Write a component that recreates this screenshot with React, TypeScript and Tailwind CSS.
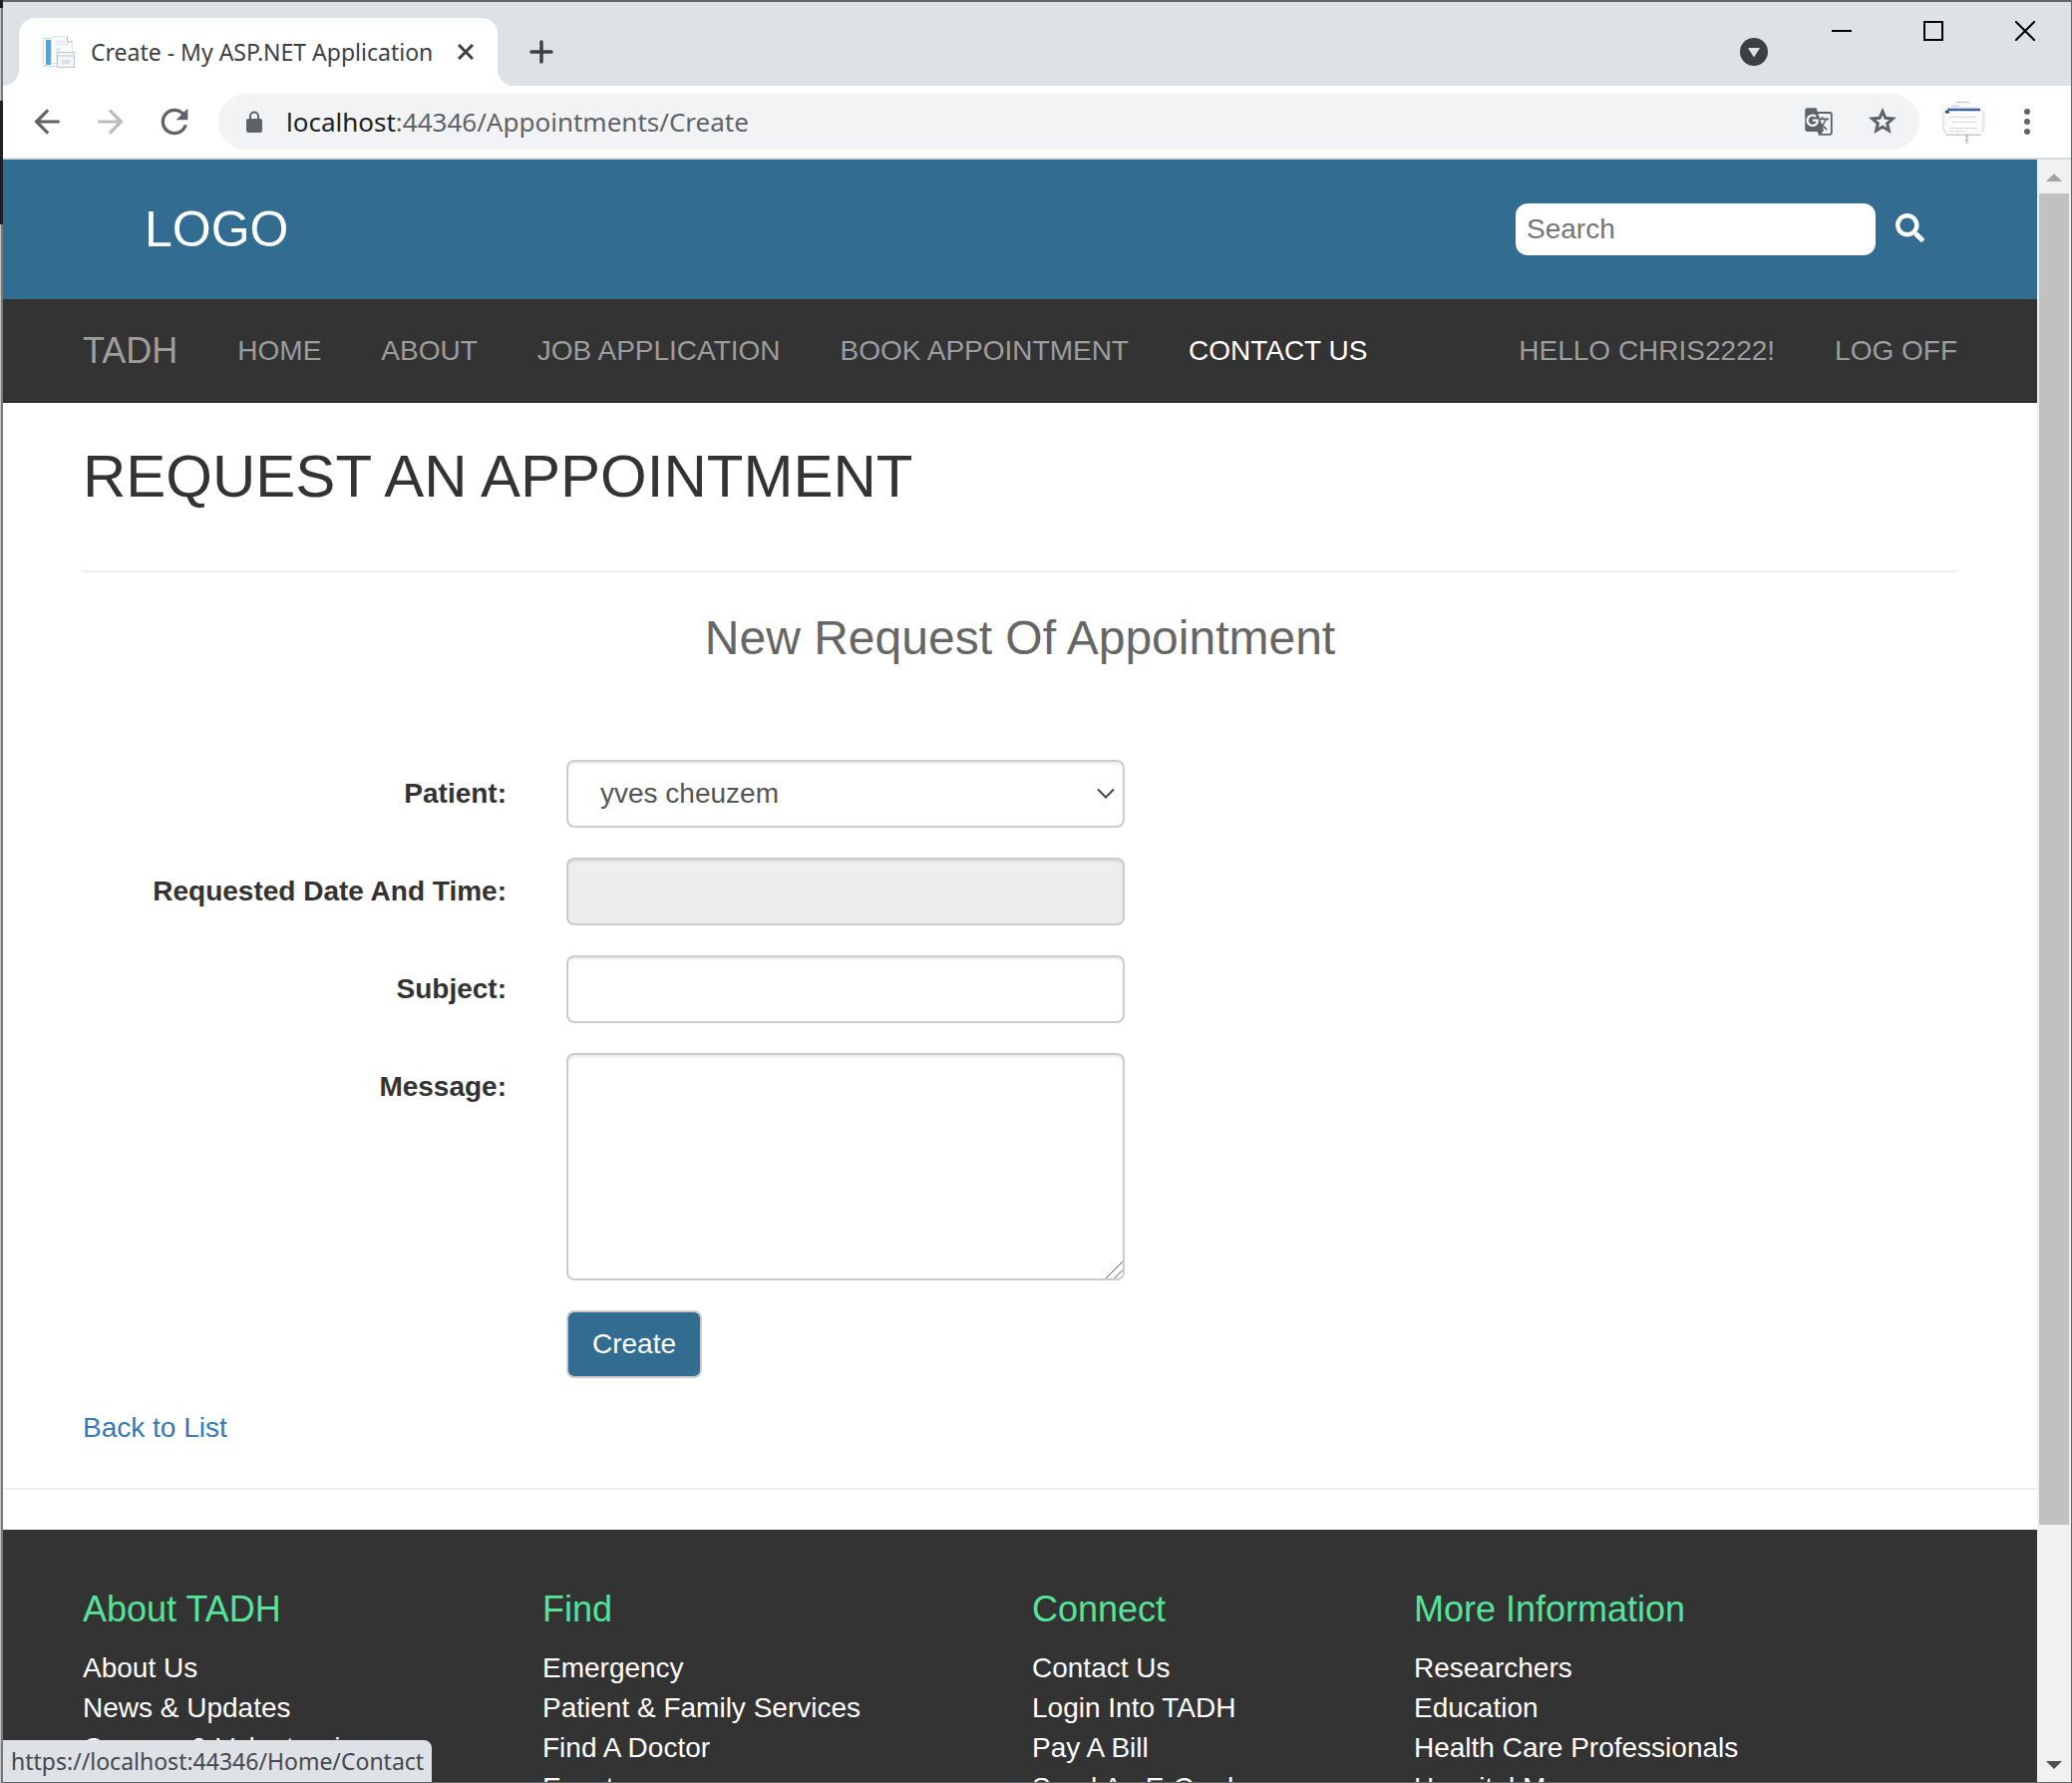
import React from "react";
import { FaSearch } from "react-icons/fa";
import { MdArrowBack, MdArrowForward, MdGTranslate, MdRefresh } from "react-icons/md";

const navLinks = ["Home", "About", "Job Application", "Book Appointment", "Contact Us"];

const footerColumns = [
  { title: "About TADH", links: ["About Us", "News & Updates", "Careers & Volunteering"] },
  { title: "Find", links: ["Emergency", "Patient & Family Services", "Find A Doctor", "Events"] },
  { title: "Connect", links: ["Contact Us", "Login Into TADH", "Pay A Bill", "Send An E-Card"] },
  { title: "More Information", links: ["Researchers", "Education", "Health Care Professionals", "Hospital Maps"] },
];

const fieldClass =
  "block w-full max-w-[560px] rounded-lg border-2 border-[#ccc] px-6 text-[#555] shadow-[inset_0_2px_2px_rgba(0,0,0,0.075)] outline-none";

function Favicon() {
  return (
    <svg width="32" height="32" viewBox="0 0 32 32" fill="none" aria-hidden="true">
      <rect x="0.5" y="2.5" width="16" height="28" fill="#fff" stroke="#c3dcec" />
      <rect x="3" y="4" width="5" height="25" fill="#5aa3d3" />
      <path d="M8.500.5h16l5 5v22h-21z" fill="#fafbfc" stroke="#dfe2e5" />
      <path d="M24.500.5v5.500h5" fill="#fff" stroke="#b4b8bc" />
      <path d="M12 5.500h10M12 8.500h14" stroke="#e6e9ed" strokeWidth="2" />
      <rect x="13" y="12" width="5" height="14" fill="#e6eaee" />
      <rect x="14.500" y="16.500" width="17" height="15" fill="#f4f5f8" stroke="#c3c7cc" />
      <path d="M15 20h16" stroke="#d3d7dd" strokeWidth="1.500" />
      <rect x="19" y="24" width="8" height="4" fill="#dde2ea" />
    </svg>
  );
}

function ProfilePicture() {
  return (
    <svg width="44" height="44" viewBox="0 0 44 44" fill="none" aria-hidden="true">
      <path d="M12 4C18 0 26 0 32 4" fill="#f4f4f6" />
      <path d="M15 2.500h13M10 6h8" stroke="#c4c4ca" />
      <rect x="1.500" y="8" width="41" height="27" rx="8" fill="#f8f5f5" stroke="#ece3e4" strokeWidth="2" />
      <rect x="5" y="8" width="35" height="26" fill="#fdfdfe" />
      <path d="M6 10h33" stroke="#3d62a8" strokeWidth="2.500" />
      <path d="M5 11v1.500h3" stroke="#24407c" strokeWidth="2" />
      <path d="M8 17.500h26M11 22.500h24M8 28.500h28M8 31.500h17" stroke="#d3d3d9" strokeDasharray="5 1 8 1" />
      <path d="M4 35.500h36" stroke="#cfcaca" />
      <path d="M25.500 35v9" stroke="#a8a8ac" strokeWidth="2" strokeDasharray="3 1" />
    </svg>
  );
}

function TabStrip() {
  return (
    <div className="flex h-21 shrink-0 items-end bg-[#dee1e6]">
      <div className="h-4 w-4 bg-white">
        <div className="h-4 w-4 rounded-br-2xl bg-[#dee1e6]" />
      </div>
      <div className="flex h-17 w-[480px] items-center rounded-t-2xl bg-white pl-6 pr-5">
        <Favicon />
        <span className="ml-4 flex-1 whitespace-nowrap text-[23px] text-[#3c4043]">Create - My ASP.NET Application</span>
        <button type="button" aria-label="Close tab" className="flex h-6 w-6 items-center justify-center">
          <svg width="16" height="16" viewBox="0 0 16 16" stroke="#3c4043" strokeWidth="3" aria-hidden="true">
            <path d="M1 1l14 14M15 1L1 15" />
          </svg>
        </button>
      </div>
      <div className="h-4 w-4 bg-white">
        <div className="h-4 w-4 rounded-bl-2xl bg-[#dee1e6]" />
      </div>
      <button type="button" aria-label="New tab" className="flex h-17 w-14 items-center justify-center">
        <svg width="24" height="24" viewBox="0 0 24 24" stroke="#3c4043" strokeWidth="3.500" strokeLinecap="round" aria-hidden="true">
          <path d="M12 2v20M2 12h20" />
        </svg>
      </button>
      <div className="flex-1" />
      <button type="button" aria-label="Search tabs" className="mr-7 flex h-17 w-7 items-center justify-center">
        <svg width="28" height="28" viewBox="0 0 28 28" aria-hidden="true">
          <circle cx="14" cy="14" r="14" fill="#3c4043" />
          <path d="M8 10h12l-6 9.500z" fill="#dee1e6" />
        </svg>
      </button>
      <div className="flex self-start">
        <button type="button" aria-label="Minimize" className="flex h-[58px] w-23 items-center justify-center">
          <span className="h-0.5 w-5 bg-black" />
        </button>
        <button type="button" aria-label="Maximize" className="flex h-[58px] w-23 items-center justify-center">
          <span className="h-5 w-5 border-2 border-black" />
        </button>
        <button type="button" aria-label="Close" className="flex h-[58px] w-23 items-center justify-center">
          <svg width="20" height="20" viewBox="0 0 20 20" stroke="#000" strokeWidth="2" aria-hidden="true">
            <path d="M0 0l20 20M20 0L0 20" />
          </svg>
        </button>
      </div>
    </div>
  );
}

function Toolbar() {
  return (
    <div className="flex h-[74px] shrink-0 items-center border-b-2 border-[#d5d8dc] bg-white pl-3">
      <button type="button" aria-label="Back" className="flex w-16 justify-center">
        <MdArrowBack size={38} color="#5f6368" />
      </button>
      <button type="button" aria-label="Forward" className="flex w-16 justify-center">
        <MdArrowForward size={38} color="#babcbe" />
      </button>
      <button type="button" aria-label="Reload" className="flex w-16 justify-center">
        <MdRefresh size={40} color="#5f6368" />
      </button>
      <div className="ml-3 flex h-14 flex-1 items-center rounded-full bg-[#f1f3f4] px-5">
        <svg className="ml-2 shrink-0" width="16" height="22" viewBox="0 0 16 22" fill="none" aria-hidden="true">
          <rect x="0" y="8" width="16" height="14" rx="2" fill="#5f6368" />
          <path d="M4 9V5.500a4 4 0 0 1 8 0V9" stroke="#5f6368" strokeWidth="2" />
        </svg>
        <div className="ml-6 flex-1 whitespace-nowrap text-[26px] text-[#5f6368]">
          <span className="text-[#202124]">localhost</span>:44346/Appointments/Create
        </div>
        <button type="button" aria-label="Translate this page">
          <MdGTranslate size={30} color="#5f6368" />
        </button>
        <button type="button" aria-label="Bookmark this page" className="mr-0.5 ml-[34px]">
          <svg width="30" height="30" viewBox="0 0 30 30" fill="none" stroke="#5f6368" strokeWidth="3" aria-hidden="true">
            <path d="M15 4.500l2.900 6.800 7.400.6-5.600 4.900 1.700 7.200-6.400-3.800-6.400 3.800 1.700-7.200-5.600-4.900 7.400-.6z" />
          </svg>
        </button>
      </div>
      <button type="button" aria-label="Profile" className="ml-[22px]">
        <ProfilePicture />
      </button>
      <button type="button" aria-label="Menu" className="mr-[30px] ml-7 flex w-7 justify-center">
        <svg width="6" height="28" viewBox="0 0 6 28" fill="#5f6368" aria-hidden="true">
          <circle cx="3" cy="4" r="3" />
          <circle cx="3" cy="14" r="3" />
          <circle cx="3" cy="24" r="3" />
        </svg>
      </button>
    </div>
  );
}

function SiteHeader() {
  return (
    <header>
      <div className="flex h-35 items-center justify-between bg-[#336c91] pr-[113px] pl-[142px]">
        <a href="#" className="text-[50px] leading-none text-white">LOGO</a>
        <form role="search" className="flex items-center">
          <input
            type="search"
            aria-label="Search"
            placeholder="Search"
            className="h-13 w-[361px] rounded-xl bg-white px-[11px] placeholder:text-[#757575] placeholder:opacity-100"
          />
          <button type="button" aria-label="Submit search" className="ml-5 pb-1">
            <FaSearch size={29} color="#fff" />
          </button>
        </form>
      </div>
      <nav className="flex h-26 items-center border-b border-[#222] bg-[#333] px-20 whitespace-nowrap text-[#9d9d9d] uppercase">
        <a href="#" className="mr-15 text-4xl">TADH</a>
        <div className="flex flex-1 gap-15">
          {navLinks.map((label) => (
            <a key={label} href="#" className={label === "Contact Us" ? "text-white" : ""}>{label}</a>
          ))}
        </div>
        <div className="flex gap-15">
          <a href="#">Hello chris2222!</a>
          <a href="#">Log off</a>
        </div>
      </nav>
    </header>
  );
}

function FormRow({ id, label, children }: { id: string; label: string; children: React.ReactNode }) {
  return (
    <div className="mb-[30px] flex gap-15">
      <label htmlFor={id} className="w-[425px] shrink-0 pt-3.5 text-right font-bold">{label}</label>
      <div className="flex-1">{children}</div>
    </div>
  );
}

function AppointmentForm() {
  return (
    <form>
      <h3 className="mb-24 pt-10 text-center text-5xl leading-[52px] text-[#666]">New Request Of Appointment</h3>
      <FormRow id="patient" label="Patient:">
        <div className="relative max-w-[560px]">
          <select id="patient" className={`${fieldClass} h-17 appearance-none bg-white pl-8`}>
            <option>yves cheuzem</option>
          </select>
          <svg
            className="pointer-events-none absolute top-7 right-2"
            width="20" height="12" viewBox="0 0 20 12" fill="none" stroke="#444" strokeWidth="2" aria-hidden="true"
          >
            <path d="M1 1.500l8 8 8-8" />
          </svg>
        </div>
      </FormRow>
      <FormRow id="date" label="Requested Date And Time:">
        <input id="date" type="text" readOnly className={`${fieldClass} h-17 bg-[#eee]`} />
      </FormRow>
      <FormRow id="subject" label="Subject:">
        <input id="subject" type="text" className={`${fieldClass} h-17 bg-white`} />
      </FormRow>
      <FormRow id="message" label="Message:">
        <div className="relative max-w-[560px]">
          <textarea id="message" className={`${fieldClass} h-57 resize-none bg-white`} />
          <svg
            className="pointer-events-none absolute right-0.5 bottom-0.5"
            width="17" height="17" viewBox="0 0 17 17" stroke="#555" aria-hidden="true"
          >
            <path d="M0 17L17 0M8.500 17l8.500-8.500" />
          </svg>
        </div>
      </FormRow>
      <div className="mb-[30px] pl-[485px]">
        <button type="button" className="h-17 rounded-lg border-2 border-[#ccc] bg-[#336c91] px-6 text-white">Create</button>
      </div>
    </form>
  );
}

function SiteFooter() {
  return (
    <footer className="grid grid-cols-[461fr_491fr_383fr_545fr] bg-[#333] px-20 py-15 text-white">
      {footerColumns.map((column) => (
        <section key={column.title}>
          <h4 className="mb-[19px] text-4xl text-[#55e39a]">{column.title}</h4>
          <ul>
            {column.links.map((link) => (
              <li key={link}><a href="#">{link}</a></li>
            ))}
          </ul>
        </section>
      ))}
    </footer>
  );
}

function Scrollbar() {
  return (
    <div className="flex w-[34px] shrink-0 flex-col bg-[#f1f1f1] px-0.5" aria-hidden="true">
      <div className="flex h-[34px] items-center justify-center pt-0.5">
        <svg width="16" height="8" viewBox="0 0 16 8" fill="#a3a3a3"><path d="M0 8l8-8 8 8z" /></svg>
      </div>
      <div className="flex-[1335] bg-[#c1c1c1]" />
      <div className="flex-[224]" />
      <div className="flex h-[34px] items-center justify-center">
        <svg width="16" height="8" viewBox="0 0 16 8" fill="#505050"><path d="M0 0l8 8 8-8z" /></svg>
      </div>
    </div>
  );
}

// Sliver of the desktop that shows beside the browser window.
function DesktopEdge() {
  return (
    <div className="flex w-[3px] shrink-0 flex-col" aria-hidden="true">
      <div className="h-2 bg-[#1c1f24]" />
      <div className="h-[93px] border-r-2 border-[#77787a] bg-[#c4c6c8]" />
      <div className="h-31 bg-[#1c1f24]" />
      <div className="flex-1 border-r-2 border-[#77787a] bg-[#c4c6c8]" />
    </div>
  );
}

export default function App() {
  return (
    <div className="flex h-screen overflow-hidden font-['Noto_Sans',sans-serif]">
      <DesktopEdge />
      <div className="relative flex min-w-0 flex-1 flex-col border-t-2 border-r border-b border-[#636566] bg-white">
        <TabStrip />
        <Toolbar />
        <div className="flex min-h-0 flex-1">
          <div className="min-w-0 flex-1 overflow-hidden font-['Liberation_Sans',Arial,sans-serif] text-[28px] leading-10 text-[#333]">
            <SiteHeader />
            <main className="px-20 pt-10">
              <h2 className="border-b-2 border-[#eee] pb-15 text-6xl leading-[68px] uppercase">Request an appointment</h2>
              <AppointmentForm />
              <a href="#" className="text-[#337ab7]">Back to List</a>
            </main>
            <hr className="my-10 border-t-2 border-[#eee]" />
            <SiteFooter />
          </div>
          <Scrollbar />
        </div>
        <div className="absolute bottom-0 left-0 flex h-[42px] items-center rounded-tr-lg bg-[#dee1e6] pr-2 pl-2 text-[23px] text-[#45484c]">
          https://localhost:44346/Home/Contact
        </div>
      </div>
    </div>
  );
}
